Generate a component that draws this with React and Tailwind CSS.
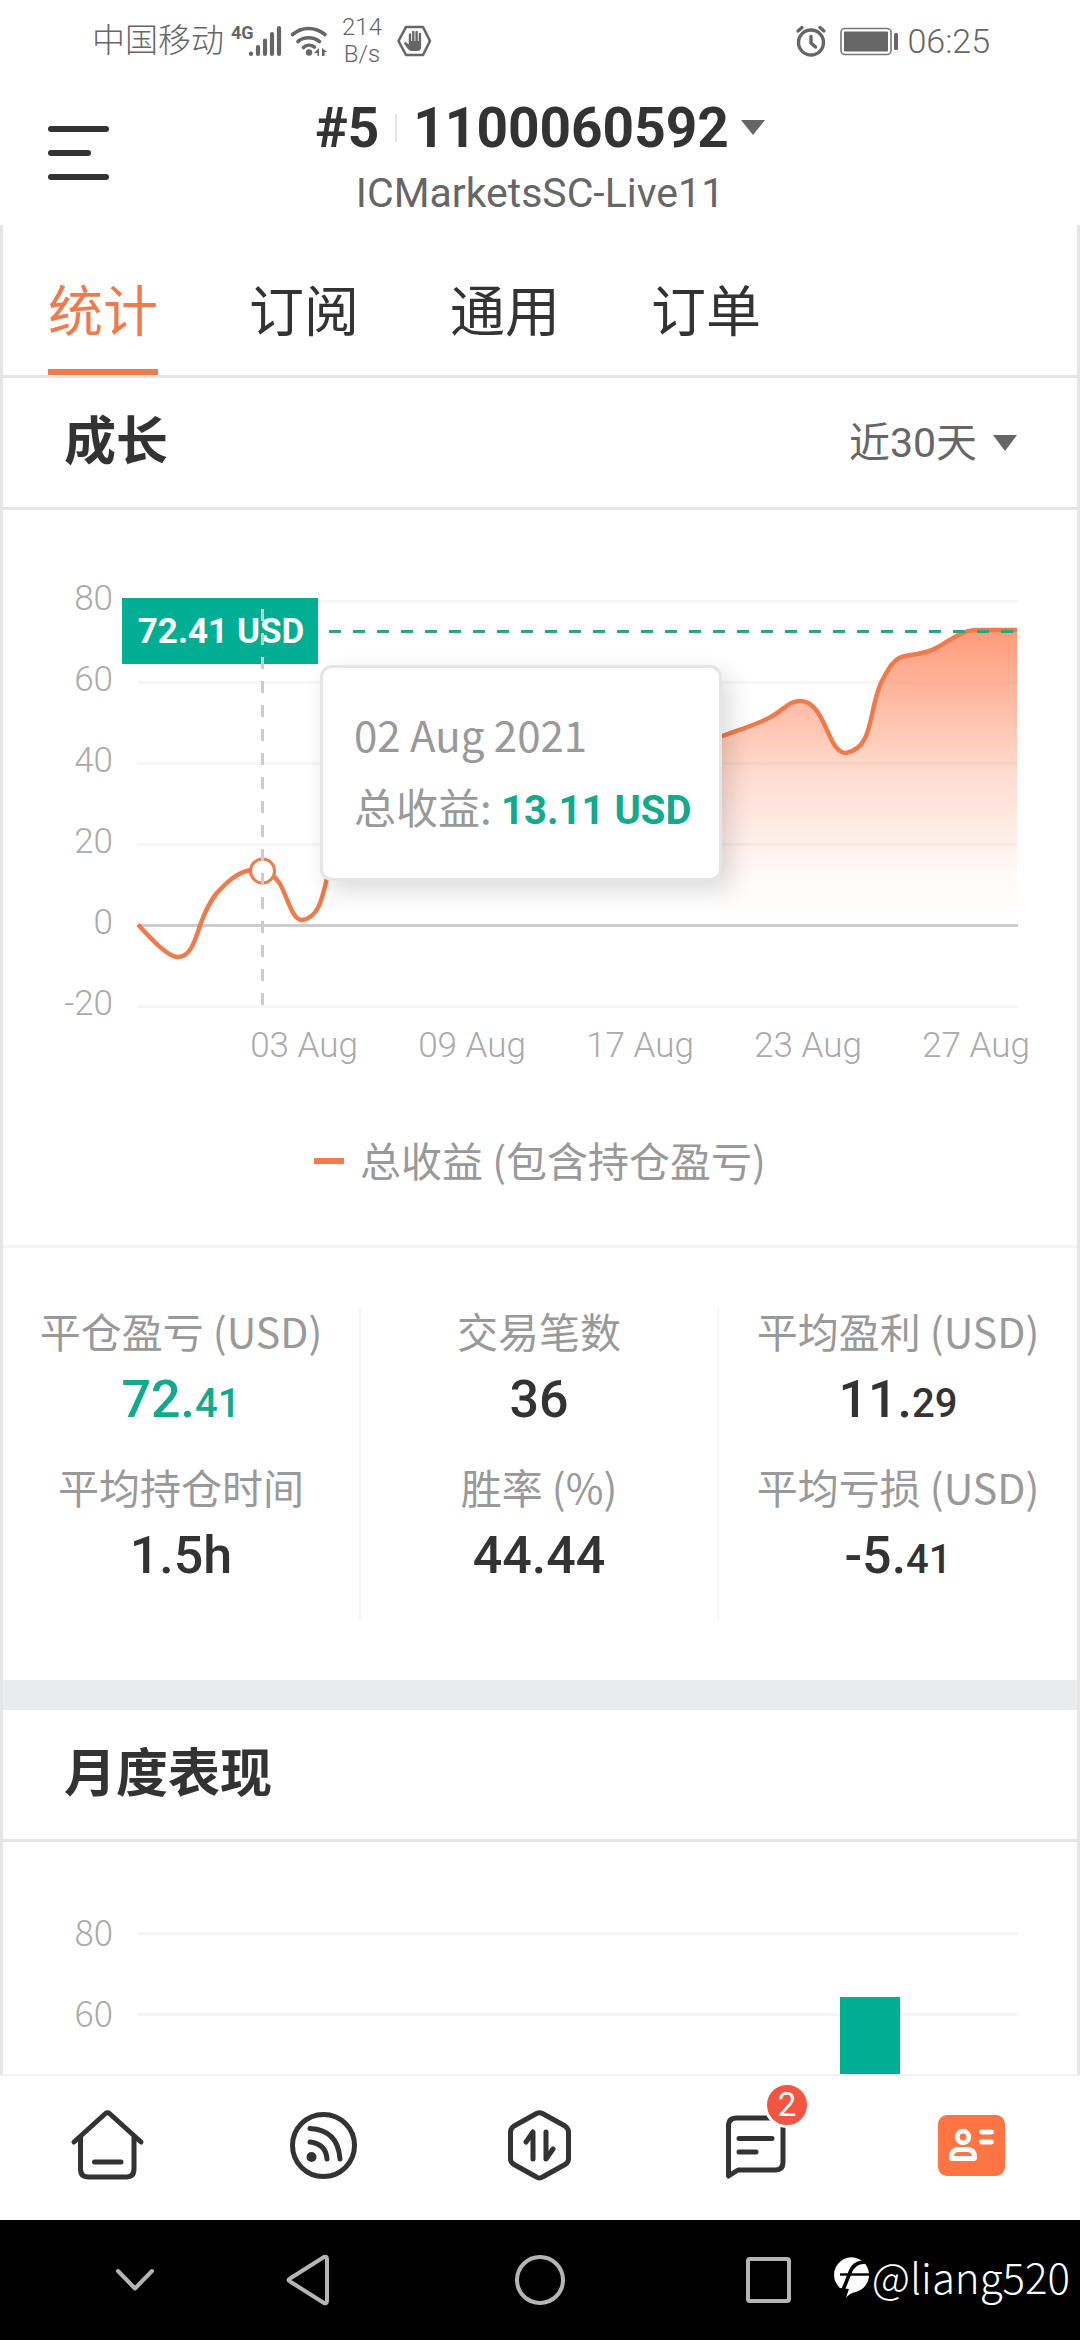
const CJK = 'font-["Noto_Sans_CJK_SC",sans-serif]';
const NUM = 'font-[Roboto,"Noto_Sans_CJK_SC",sans-serif]';

const stats = [
  [
    { label: "平仓盈亏 (USD)", value: "72.", small: "41", green: true },
    { label: "平均持仓时间", value: "1.5h" },
  ],
  [
    { label: "交易笔数", value: "36" },
    { label: "胜率 (%)", value: "44.44" },
  ],
  [
    { label: "平均盈利 (USD)", value: "11.", small: "29" },
    { label: "平均亏损 (USD)", value: "-5.", small: "41" },
  ],
];

const curveStart =
  "M138 924.5C152 940 168 957 178 957C192 957 196 936 201 923C205 912 209 903 216 894C226 883 238 871 252 870C265 869 272 872 280 884C288 898 292 920 302 920C318 918 322 900 327 878";
const curveMiddle =
  "C332 850 336 835 350 835C390 835 400 800 460 790C540 775 560 760 600 760C650 760 680 752 720 737";
const curveEnd =
  "C740 729.500 755 725 769 718C783 711 788 701 800 701C826 701 827 753 846 753C874 748 868 712 881 683C888 669 894 657 906 656C918 653 926 654 936 648C950 641 960 631 975 630L1017 630";

function Status() {
  return (
    <div className="flex h-20 items-center justify-between pt-0.5 pr-[90px] pl-[92px] text-[#666]">
      <div className="flex items-center">
        <span className="text-[33px] leading-[36px] font-light">中国移动</span>
        <svg className="ml-1.5 h-10 w-[104px]" viewBox="230 20 104 40" fill="none" stroke="#666" strokeLinecap="round">
          <text x="231" y="38" fontSize="18" fontWeight="700" fill="#666" stroke="none" fontFamily="Liberation Sans Narrow, Roboto">4G</text>
          <path d="M251 52.500V53M258 46V53M265 39.500V53M272 33V53M279 27V53" strokeWidth="4.200" />
          <path d="M292.500 33.500C302 25.500 315 25.500 325 33.500M298 40.500C304 35.500 313 35.500 319.500 40.500M303.500 46.500C306.500 43.500 311 43.500 314.500 46" strokeWidth="3.600" />
          <circle cx="309" cy="51.500" r="3.200" fill="#666" stroke="none" />
          <path d="M314 52L319 47V55H317.500V52ZM322 55V47L327 51H324.500V55Z" fill="#666" stroke="none" />
        </svg>
        <div className="ml-2 flex flex-col items-center text-2xl leading-[27px] font-light">
          <span>214</span>
          <span>B/s</span>
        </div>
        <svg className="ml-3.5 h-9 w-9" viewBox="394 23 36 36">
          <path d="M404 27H421L428 41L421 55H404L396.500 41Z" fill="none" stroke="#666" strokeWidth="2.600" strokeLinejoin="round" />
          <path d="M408 42V34.500M411.300 42V32M414.600 42V32M417.900 42V34" stroke="#666" strokeWidth="2.400" strokeLinecap="round" />
          <path d="M406.800 41H419.100V47Q419.100 51 415 51H410Q407.500 51 405.500 48.500L402 43.500Q402.500 41.500 404.500 42.500L406.800 44.500Z" fill="#666" />
        </svg>
      </div>
      <div className="flex items-center">
        <svg className="h-8 w-8" viewBox="794 24 32 32" fill="none" stroke="#666" strokeLinecap="round">
          <circle cx="810" cy="41.500" r="12.500" strokeWidth="3.400" />
          <path d="M797 30L801 26.500M823 30L819 26.500" strokeWidth="3.400" />
          <path d="M810 35.500V42L814.500 46" strokeWidth="3.400" />
        </svg>
        <svg className="ml-3 h-8 w-[60px]" viewBox="839 24 60 32">
          <rect x="841" y="27.500" width="50" height="26" rx="4" fill="none" stroke="#777" strokeWidth="1.600" />
          <rect x="844" y="30.500" width="44" height="20" rx="1" fill="#666" />
          <rect x="894" y="32" width="4" height="17" rx="1.500" fill="#666" />
        </svg>
        <time className="ml-2 text-[34px] leading-[40px] font-light">06:25</time>
      </div>
    </div>
  );
}

function Header() {
  return (
    <header className="relative flex h-[145px] flex-col items-center">
      <button aria-label="菜单" className="absolute top-[46px] left-12 flex flex-col gap-[18px]">
        <span className="h-1.5 w-[61px] rounded-full bg-[#333]" />
        <span className="h-1.5 w-[43px] rounded-full bg-[#333]" />
        <span className="h-1.5 w-[61px] rounded-full bg-[#333]" />
      </button>
      <button className="mt-4 flex items-center text-[55px] leading-[64px] font-bold text-[#333]">
        <span>#5</span>
        <span className="mx-4 h-7 w-0.5 bg-[#e5e5e5]" />
        <span>1100060592</span>
        <svg className="ml-3 h-4 w-6" viewBox="0 0 24 16"><path d="M0 0H24L12 15Z" fill="#666" /></svg>
      </button>
      <p className="text-[41px] leading-[66px] font-normal text-[#666]">ICMarketsSC-Live11</p>
    </header>
  );
}

function GrowthChart() {
  return (
    <div className="relative h-[570px]">
      <svg className="block h-[570px] w-full" viewBox="3 510 1074 570" role="img" aria-label="总收益">
        <defs>
          <linearGradient id="area" gradientUnits="userSpaceOnUse" x1="0" x2="0" y1="630" y2="925">
            <stop offset="0" stopColor="#ff7040" stopOpacity="0.700" />
            <stop offset="0.500" stopColor="#ff7040" stopOpacity="0.240" />
            <stop offset="0.850" stopColor="#ff7040" stopOpacity="0.030" />
            <stop offset="1" stopColor="#ff7040" stopOpacity="0" />
          </linearGradient>
        </defs>
        <path d="M138 601.500H1018M138 682.500H1018M138 763.500H1018M138 844.500H1018M138 1006.500H1018" stroke="#f6f6f6" strokeWidth="3" />
        <path d="M138 925.500H1018" stroke="#ccc" strokeWidth="3" />
        <path d={`M720 925V737${curveEnd}V925Z`} fill="url(#area)" />
        <path d={curveStart + curveMiddle + curveEnd} fill="none" stroke="#ef7a4b" strokeWidth="4.500" />
        <circle cx="262.500" cy="871" r="12" fill="#fff" stroke="#ef7a4b" strokeWidth="3" />
        <path d="M329 631.500H1017" stroke="#26a58b" strokeWidth="3" strokeDasharray="12 12" />
        <g fontFamily="Roboto" fontSize="35" fontWeight="300" fill="#aaa">
          <g textAnchor="end">
            <text x="113" y="610">80</text>
            <text x="113" y="691">60</text>
            <text x="113" y="772">40</text>
            <text x="113" y="853">20</text>
            <text x="113" y="934">0</text>
            <text x="113" y="1015">-20</text>
          </g>
          <g textAnchor="middle">
            <text x="304" y="1057">03 Aug</text>
            <text x="472" y="1057">09 Aug</text>
            <text x="640" y="1057">17 Aug</text>
            <text x="808" y="1057">23 Aug</text>
            <text x="976" y="1057">27 Aug</text>
          </g>
        </g>
        <rect x="122" y="598" width="196" height="66" fill="#00ae93" />
        <text x="221" y="643" textAnchor="middle" fontFamily="Roboto" fontSize="35" fontWeight="700" fill="#fff">72.41 USD</text>
        <path d="M262.500 609V1006" stroke="#ccc" strokeWidth="3" strokeDasharray="12 12" />
      </svg>
      <div className="absolute top-[155px] left-[317px] h-[216px] w-[402px] rounded-xl border-[3px] border-[#e5e5e5] bg-white px-[31px] pt-[30px] text-[42px] leading-[72px] whitespace-nowrap text-[#999] shadow-[8px_10px_24px_rgba(0,0,0,0.14)]">
        <p className={CJK + " leading-[72px]"}>02 Aug 2021</p>
        <p className={CJK + " leading-[72px]"}>
          总收益: <strong className="font-[Roboto] text-[40px] font-bold text-[#12a98d]">13.11 USD</strong>
        </p>
      </div>
    </div>
  );
}

function BottomNav() {
  const item = "relative flex flex-1 items-center justify-center";
  const line = { fill: "none", stroke: "#333", strokeWidth: 5, strokeLinecap: "round", strokeLinejoin: "round" };
  return (
    <nav className="flex h-[146px] shrink-0 border-t-2 border-[#f1f1f1] bg-white pb-1.5">
      <button className={item} aria-label="首页">
        <svg className="h-20 w-20" viewBox="68 2105 80 80" {...line}>
          <path d="M74 2142L105.500 2113.500Q107.500 2112 109.500 2113.500L141 2142M80.500 2137V2169Q80.500 2177 88.500 2177H126Q134 2177 134 2169V2137M94.500 2162H121" />
        </svg>
      </button>
      <button className={item} aria-label="动态">
        <svg className="h-20 w-20" viewBox="284 2105 80 80" {...line}>
          <circle cx="323.500" cy="2145.500" r="31" />
          <path d="M310 2142Q326 2144 327 2159M310 2128.500Q338 2130 340 2159" />
          <circle cx="311.500" cy="2157" r="5" fill="#333" stroke="none" />
        </svg>
      </button>
      <button className={item} aria-label="交易">
        <svg className="h-20 w-20" viewBox="500 2105 80 80" {...line}>
          <path d="M536.500 2113.500Q539.500 2112 542.500 2113.500L565 2126Q568.500 2128.500 568.500 2132V2159Q568.500 2162.500 565 2164.500L542.500 2177Q539.500 2179 536.500 2177L514 2164.500Q510.500 2162.500 510.500 2159V2132Q510.500 2128.500 514 2126Z" />
          <path d="M526 2142L533 2132V2159M546 2132V2159L553 2149" />
        </svg>
      </button>
      <button className={item} aria-label="消息">
        <svg className="h-20 w-20" viewBox="716 2105 80 80" {...line}>
          <path d="M728.500 2176V2126Q728.500 2118 736.500 2118H775Q783 2118 783 2126V2162Q783 2170 775 2170H738Z" />
          <path d="M739 2138.500H772M739 2152H756" />
        </svg>
        <span className="absolute top-1.5 left-1/2 ml-2 flex h-[46px] w-[46px] items-center justify-center rounded-full border-[3px] border-white bg-[#f25643] text-[33px] leading-[40px] text-white">2</span>
      </button>
      <button className={item} aria-label="账户">
        <svg className="h-20 w-20" viewBox="932 2105 80 80">
          <rect x="938" y="2115" width="67" height="61" rx="9" fill="#ff7443" />
          <g fill="none" stroke="#fff" strokeWidth="4.800" strokeLinecap="round" strokeLinejoin="round">
            <circle cx="963" cy="2137" r="5.800" />
            <path d="M951.500 2158.500V2157Q951.500 2149.500 959 2149.500H967Q974.500 2149.500 974.500 2157V2158.500ZM981.500 2132H991.500M981.500 2142H991.500" />
          </g>
        </svg>
      </button>
    </nav>
  );
}

function SystemBar() {
  return (
    <div className="relative h-[120px] shrink-0 bg-black">
      <div className="flex h-full items-center pl-[105px]">
        <button aria-label="收起"><svg className="h-[60px] w-[60px]" viewBox="0 0 60 60" fill="none" stroke="#b5b5b5" strokeWidth="4" strokeLinecap="round" strokeLinejoin="round"><path d="M13 21L30 38.500L47 21" /></svg></button>
        <button aria-label="返回" className="ml-[114px]"><svg className="h-[60px] w-[60px]" viewBox="0 0 60 60" fill="none" stroke="#b5b5b5" strokeWidth="4" strokeLinejoin="round"><path d="M11 28.500Q8 30 11 31.500L45 53Q48 54 48 51V9Q48 6 45 7Z" /></svg></button>
        <button aria-label="主屏幕" className="ml-[171px]"><svg className="h-[60px] w-[60px]" viewBox="0 0 60 60" fill="none" stroke="#b5b5b5" strokeWidth="4"><circle cx="30" cy="30" r="23" /></svg></button>
        <button aria-label="最近任务" className="ml-[169px]"><svg className="h-[60px] w-[60px]" viewBox="0 0 60 60" fill="none" stroke="#b5b5b5" strokeWidth="4"><rect x="9" y="9" width="41" height="42" rx="2" /></svg></button>
      </div>
      <div className="absolute top-7 right-2.5 flex items-center text-white">
        <svg className="mt-1 h-11 w-[38px]" viewBox="0 0 38 44">
          <path d="M6 32A17.500 17.500 0 1 1 23 35.500Q16 37 12 41.500L15 33Z" fill="#fff" />
          <path d="M33 6Q19 5 15.500 18L9 34" fill="none" stroke="#000" strokeWidth="3.600" />
          <path d="M6 18.500H37" fill="none" stroke="#000" strokeWidth="2.400" />
        </svg>
        <span className={CJK + " text-[42px] leading-[56px] font-light"}>@liang520</span>
      </div>
    </div>
  );
}

export default function App() {
  return (
    <div className={NUM + " flex min-h-screen flex-col bg-white"}>
      <Status />
      <Header />
      <main className="flex flex-1 flex-col border-x-[3px] border-[#e5e5e5]">
        <div role="tablist" className="flex h-[153px] items-end gap-[91px] border-b-[3px] border-[#e5e5e5] pl-[45px] text-[55px] text-[#333]">
          <button role="tab" aria-selected="true" className="h-[110px] border-b-[6px] border-[#ef7a4b] pb-2.5 leading-[80px] text-[#ef7a4b]">统计</button>
          <button role="tab" aria-selected="false" className="h-[110px] pb-4 leading-[80px]">订阅</button>
          <button role="tab" aria-selected="false" className="h-[110px] pb-4 leading-[80px]">通用</button>
          <button role="tab" aria-selected="false" className="h-[110px] pb-4 leading-[80px]">订单</button>
        </div>
        <div className="flex h-[132px] items-center justify-between border-b-[3px] border-[#e5e5e5] pr-[60px] pl-[61px]">
          <h2 className="text-[52px] leading-[72px] font-bold text-[#333]">成长</h2>
          <button className="flex items-center gap-4 text-[41px] leading-[60px] text-[#666]">
            近30天
            <svg className="h-4 w-6" viewBox="0 0 24 16"><path d="M0 0H24L12 16Z" fill="#666" /></svg>
          </button>
        </div>
        <GrowthChart />
        <div className="flex h-[168px] items-center justify-center gap-4 border-b-[3px] border-[#f5f5f5] pb-1 text-[41px] leading-[60px] text-[#999]">
          <span className="h-1.5 w-[30px] bg-[#f47b4a]" />
          <span className={CJK + " pb-1"}>总收益 (包含持仓盈亏)</span>
        </div>
        <div className="grid h-[432px] grid-cols-3 divide-x-2 divide-[#f5f5f5] pt-[60px] pb-[60px]">
          {stats.map((column, i) => (
            <dl key={i} className="flex flex-col text-center whitespace-nowrap">
              {column.map((s) => (
                <div key={s.label} className="h-[156px]">
                  <dt className={CJK + " text-[41px] leading-[44px] text-[#999]"}>{s.label}</dt>
                  <dd className={(s.green ? "text-[#12a98d]" : "text-[#333]") + " pt-2.5 text-[52px] leading-[76px] font-medium"}>
                    {s.value}
                    {s.small && <span className="text-[40px]">{s.small}</span>}
                  </dd>
                </div>
              ))}
            </dl>
          ))}
        </div>
        <div className="h-[30px] bg-[#e9ebec]" />
        <div className="flex h-[132px] items-center border-b-[3px] border-[#e5e5e5] pl-[61px]">
          <h2 className="text-[52px] leading-[72px] font-bold text-[#333]">月度表现</h2>
        </div>
        <svg className="block h-[232px] w-full" viewBox="3 1842 1074 232" role="img" aria-label="月度表现">
          <path d="M138 1933.500H1018M138 2014.500H1018" stroke="#f5f5f5" strokeWidth="3" />
          <rect x="840" y="1997" width="60" height="77" fill="#00ae93" />
          <g fontFamily="Noto Sans CJK SC" fontSize="36" fontWeight="300" fill="#aaa" textAnchor="end">
            <text x="113" y="1946">80</text>
            <text x="113" y="2027">60</text>
          </g>
        </svg>
      </main>
      <BottomNav />
      <SystemBar />
    </div>
  );
}
